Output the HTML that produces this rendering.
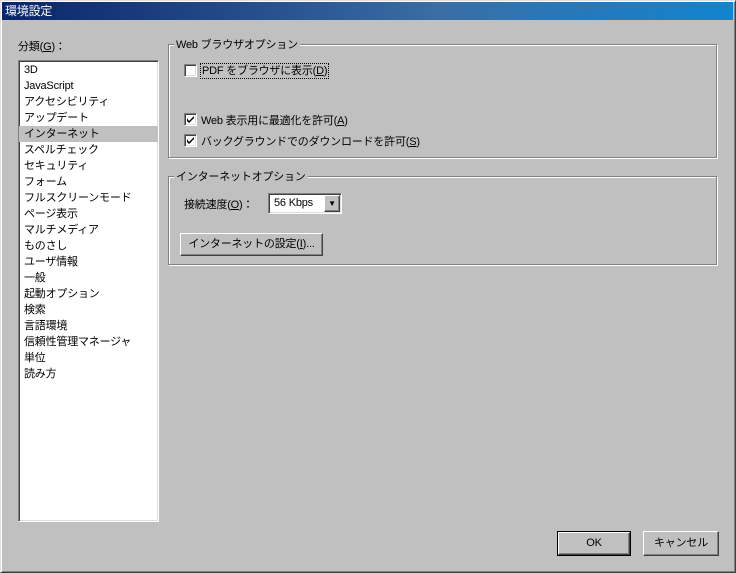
<!DOCTYPE html>
<html><head><meta charset="utf-8"><style>
*{margin:0;padding:0;box-sizing:border-box}
body{width:736px;height:573px;background:#c0c0c0;font:11px "Liberation Sans","Noto Sans CJK JP",sans-serif;letter-spacing:-0.2px;color:#000;position:relative;overflow:hidden}
.a{position:absolute;white-space:nowrap}
.win{left:0;top:0;width:736px;height:573px;border:1px solid;border-color:#dfdfdf #404040 #404040 #dfdfdf;box-shadow:inset 1px 1px #fff,inset -1px -1px #808080}
.title{left:2px;top:2px;width:731px;height:18px;background:linear-gradient(90deg,#0a246a,#3a6ea5 60%,#1084d0);color:#fff;font-size:12px;line-height:18px;padding-left:3px}
.sunk{border:1px solid;border-color:#808080 #fff #fff #808080;box-shadow:inset 1px 1px #404040,inset -1px -1px #dfdfdf}
.grp{border:1px solid #808080;box-shadow:1px 1px #fff,inset 1px 1px #fff}
.lg{background:#c0c0c0;padding:0 2px;line-height:14px}
.cb{width:13px;height:13px;background:#fff}
.cb svg{position:absolute;left:1px;top:1px}
.btn{background:#c0c0c0;border:1px solid;border-color:#fff #404040 #404040 #fff;box-shadow:inset -1px -1px #808080;text-align:center}
.list div{height:16px;line-height:16px;padding-left:5px;white-space:nowrap}
</style></head><body>
<div class="a win"></div>
<div class="a title">環境設定</div>
<div class="a" style="left:18px;top:38px">分類(<u>G</u>)：</div>
<div class="a sunk list" style="left:18px;top:60px;width:141px;height:462px;background:#fff;padding-top:1px">
<div>3D</div><div>JavaScript</div><div>アクセシビリティ</div><div>アップデート</div><div style="background:#c0c0c0">インターネット</div><div>スペルチェック</div><div>セキュリティ</div><div>フォーム</div><div>フルスクリーンモード</div><div>ページ表示</div><div>マルチメディア</div><div>ものさし</div><div>ユーザ情報</div><div>一般</div><div>起動オプション</div><div>検索</div><div>言語環境</div><div>信頼性管理マネージャ</div><div>単位</div><div>読み方</div>
</div>
<div class="a grp" style="left:168px;top:44px;width:549px;height:114px"></div>
<div class="a lg" style="left:174px;top:38px">Web ブラウザオプション</div>
<div class="a sunk cb" style="left:184px;top:64px"></div>
<div class="a" style="left:200px;top:63px;border:1px dotted #000;padding:0 1px;line-height:14px">PDF をブラウザに表示(<u>D</u>)</div>
<div class="a sunk cb" style="left:184px;top:113px"><svg width="9" height="9" viewBox="0 0 9 9"><path d="M1 3v3l2 2 5-5V1L3 6z" fill="#000"/></svg></div>
<div class="a" style="left:201px;top:112px">Web 表示用に最適化を許可(<u>A</u>)</div>
<div class="a sunk cb" style="left:184px;top:134px"><svg width="9" height="9" viewBox="0 0 9 9"><path d="M1 3v3l2 2 5-5V1L3 6z" fill="#000"/></svg></div>
<div class="a" style="left:201px;top:133px">バックグラウンドでのダウンロードを許可(<u>S</u>)</div>
<div class="a grp" style="left:168px;top:176px;width:549px;height:89px"></div>
<div class="a lg" style="left:174px;top:170px">インターネットオプション</div>
<div class="a" style="left:184px;top:196px">接続速度(<u>O</u>)：</div>
<div class="a sunk" style="left:268px;top:193px;width:74px;height:21px;background:#fff;padding:3px 0 0 5px">56 Kbps</div>
<div class="a btn" style="left:324px;top:195px;width:16px;height:17px;font-size:8px;line-height:15px">▼</div>
<div class="a btn" style="left:180px;top:233px;width:143px;height:23px;line-height:21px">インターネットの設定(<u>I</u>)...</div>
<div class="a" style="left:557px;top:531px;width:74px;height:25px;border:1px solid #000"></div>
<div class="a btn" style="left:558px;top:532px;width:72px;height:23px;line-height:21px">OK</div>
<div class="a btn" style="left:643px;top:531px;width:76px;height:25px;line-height:23px">キャンセル</div>
</body></html>
